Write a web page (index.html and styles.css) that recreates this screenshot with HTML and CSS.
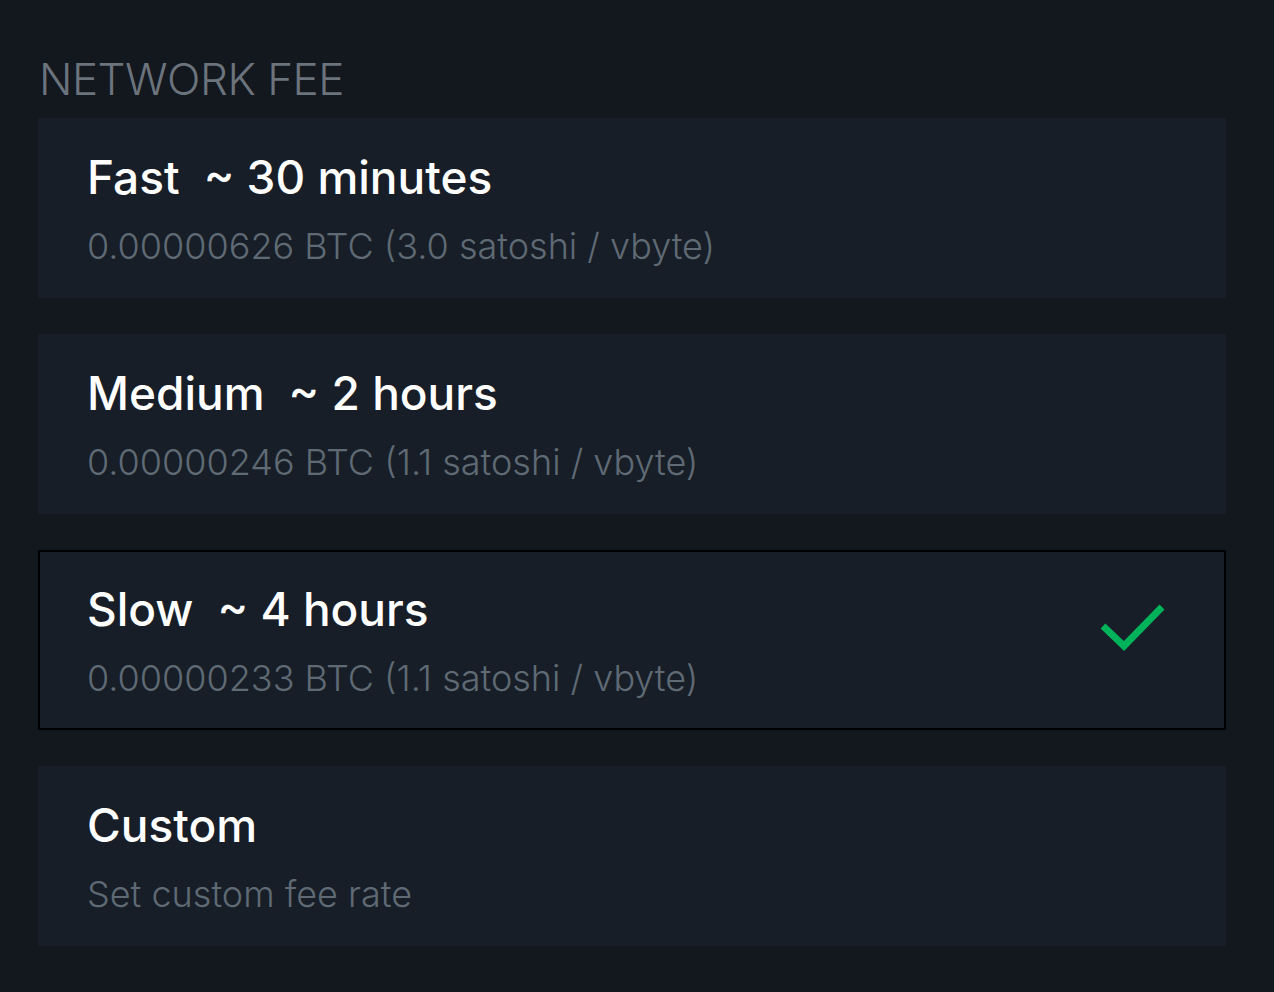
FILE: index.html
```html
<!DOCTYPE html>
<html lang="en">
<head>
    <meta charset="UTF-8">
    <title>Network fee</title>
    <link rel="stylesheet" href="styles.css">
</head>
<body>

    <!-- fee picker -->
    <div class="section">
        <h2 class="section-title">NETWORK FEE</h2>

        <div class="fee-list">
            <div class="fee">
                <div class="fee-text">
                    <p class="fee-name">Fast<span class="eta">~ 30 minutes</span></p>
                    <p class="fee-detail">0.00000626 BTC (3.0 satoshi / vbyte)</p>
                </div>
            </div>

            <div class="fee">
                <div class="fee-text">
                    <p class="fee-name">Medium<span class="eta">~ 2 hours</span></p>
                    <p class="fee-detail">0.00000246 BTC (1.1 satoshi / vbyte)</p>
                </div>
            </div>

            <div class="fee selected">
                <div class="fee-text">
                    <p class="fee-name">Slow<span class="eta">~ 4 hours</span></p>
                    <p class="fee-detail">0.00000233 BTC (1.1 satoshi / vbyte)</p>
                </div>
                <svg class="check" width="72" height="52" viewBox="0 0 72 52">
                    <polyline points="6,25 27,45 65,6" fill="none" stroke="#00b35a" stroke-width="7"/>
                </svg>
            </div>

            <div class="fee">
                <div class="fee-text">
                    <p class="fee-name">Custom</p>
                    <p class="fee-detail">Set custom fee rate</p>
                </div>
            </div>
        </div>
    </div>

</body>
</html>
```

FILE: styles.css
```css
html, body {
    margin: 0;
    background: #13171e;
}
body {
    font-family: Inter, "Noto Sans", sans-serif;
    color: #fff;
    padding: 52px 48px 0 38px;
}
.section-title {
    margin: 0 0 12px 1px;
    font-size: 44px;
    font-weight: 300;
    color: #6b737c;
    line-height: 54px;
    letter-spacing: -0.5px;
}
.fee-list {
    display: flex;
    flex-direction: column;
    gap: 36px;
}
.fee {
    height: 180px;
    box-sizing: border-box;
    background: #171e27;
    padding: 33px 57px 0 49px;
    display: flex;
    align-items: flex-start;
    justify-content: space-between;
}
.fee.selected {
    border: 2px solid #000;
    padding: 31px 55px 0 47px;
}
.fee-name {
    margin: 0;
    font-size: 46px;
    font-weight: 500;
    line-height: 52px;
}
.eta {
    margin-left: 24px;
}
.fee-detail {
    margin: 22px 0 0;
    font-size: 36px;
    font-weight: 300;
    line-height: 42px;
    color: #5f6a75;
}
.check {
    display: block;
    margin-top: 18px;
}
```
